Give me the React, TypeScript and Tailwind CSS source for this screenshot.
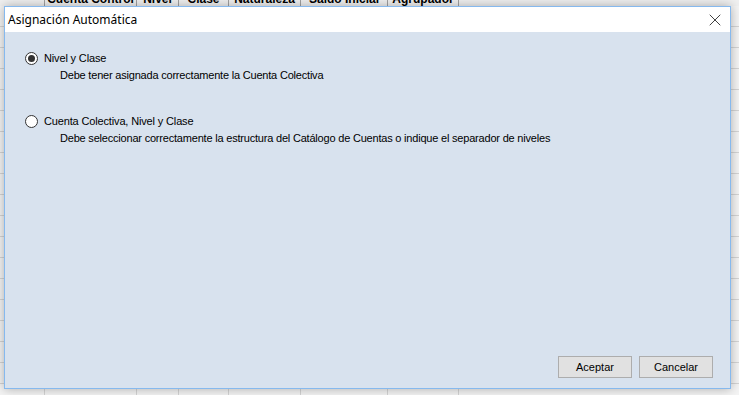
import { X } from 'lucide-react';

const columns = [
  { label: '', width: 45 },
  { label: 'Cuenta Control', width: 92 },
  { label: 'Nivel', width: 42 },
  { label: 'Clase', width: 50 },
  { label: 'Naturaleza', width: 72 },
  { label: 'Saldo Inicial', width: 87 },
  { label: 'Agrupador', width: 71 },
];

const rows = Array.from({ length: 20 });

function Radio({ checked }: { checked?: boolean }) {
  return (
    <span className="w-[13px] h-[13px] rounded-full border border-[#333333] bg-white flex items-center justify-center shrink-0">
      {checked && <span className="w-[7px] h-[7px] rounded-full bg-[#333333]" />}
    </span>
  );
}

function Option({ checked, label, hint }: { checked?: boolean; label: string; hint: string }) {
  return (
    <div className="flex flex-col">
      <label className="flex items-center gap-[6px] h-[13px]">
        <Radio checked={checked} />
        <span className="text-black tracking-[-0.15px]">{label}</span>
      </label>
      <p className="pl-[35px] mt-[4px] leading-[13px] tracking-[-0.2px]">{hint}</p>
    </div>
  );
}

export default function App() {
  return (
    <div className="relative w-[739px] h-[395px] overflow-hidden bg-[#f4f4f4] font-['Liberation_Sans',Arial,sans-serif]">
      {/* spreadsheet behind the dialog */}
      <div className="flex h-[24px] -mt-[18px] bg-[#f0f0f0]">
        {columns.map((c, i) => (
          <div
            key={i}
            style={{ width: c.width }}
            className="h-full border-r border-[#a0a0a0] flex items-end justify-center pb-[1px] text-[12px] font-bold text-black leading-none"
          >
            {c.label}
          </div>
        ))}
      </div>
      {rows.map((_, r) => (
        <div key={r} className="flex h-[21px] border-b border-[#d4d4d4]">
          {columns.map((c, i) => (
            <div key={i} style={{ width: c.width }} className="h-full border-r border-[#d4d4d4]" />
          ))}
        </div>
      ))}

      {/* dialog */}
      <div className="absolute left-[4px] top-[6px] w-[727px] h-[383px] border border-[#86b9ee] flex flex-col shadow-[0_0_10px_rgba(0,0,0,0.3)]">
        <div className="h-[25px] bg-white flex items-center justify-between pl-[3px] pr-[5px] font-['Noto_Sans',sans-serif] text-[12px] text-black">
          <span>Asignación Automática</span>
          <X className="w-[20px] h-[20px] text-black" strokeWidth={0.9} />
        </div>
        <div className="flex-1 bg-[#d8e2ee] flex flex-col justify-between pl-[20px] pt-[20px] pr-[17px] pb-[10px] text-[11px] text-black">
          <div className="flex flex-col gap-[33px]">
            <Option
              checked
              label="Nivel y Clase"
              hint="Debe tener asignada correctamente la Cuenta Colectiva"
            />
            <Option
              label="Cuenta Colectiva, Nivel y Clase"
              hint="Debe seleccionar correctamente la estructura del Catálogo de Cuentas o indique el separador de niveles"
            />
          </div>
          <div className="flex justify-end gap-[7px]">
            <button className="w-[74px] h-[22px] bg-[#e1e1e1] border border-[#adadad] text-[11px]">Aceptar</button>
            <button className="w-[74px] h-[22px] bg-[#e1e1e1] border border-[#adadad] text-[11px]">Cancelar</button>
          </div>
        </div>
      </div>
    </div>
  );
}
